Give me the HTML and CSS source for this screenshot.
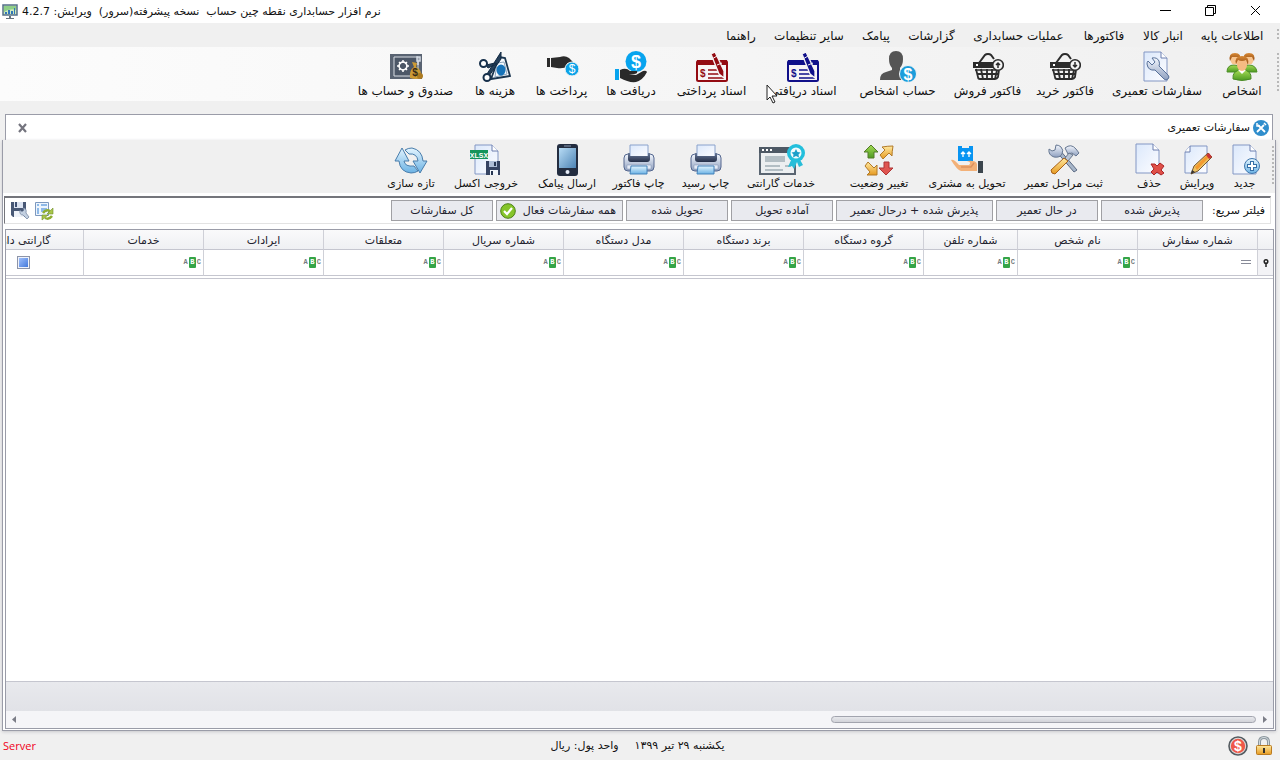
FILE: index.html
```html
<!DOCTYPE html>
<html lang="fa" dir="rtl">
<head>
<meta charset="utf-8">
<title>نرم افزار حسابداری نقطه چین حساب</title>
<link rel="stylesheet" href="styles.css">
</head>
<body>
<svg class="defs" aria-hidden="true">
  <defs>
    <linearGradient id="paper" x1="0" y1="0" x2="1" y2="1"><stop offset="0" stop-color="#dbe8fb"/><stop offset="1" stop-color="#fdfdff"/></linearGradient>
    <linearGradient id="metal" x1="0" y1="0" x2="0" y2="1"><stop offset="0" stop-color="#f2f6fd"/><stop offset="1" stop-color="#8fa0bf"/></linearGradient>
    <linearGradient id="dark" x1="0" y1="0" x2="0" y2="1"><stop offset="0" stop-color="#6b7c9c"/><stop offset="1" stop-color="#252f48"/></linearGradient>
    <linearGradient id="sky" x1="0" y1="0" x2="0" y2="1"><stop offset="0" stop-color="#e4f5ff"/><stop offset="1" stop-color="#6bb2e4"/></linearGradient>
    <linearGradient id="gold" x1="0" y1="0" x2="0" y2="1"><stop offset="0" stop-color="#ffe9a0"/><stop offset="1" stop-color="#e69a20"/></linearGradient>
    <linearGradient id="screen" x1="0" y1="0" x2="1" y2="1"><stop offset="0" stop-color="#b8dcf5"/><stop offset="1" stop-color="#4d84b5"/></linearGradient>
    <linearGradient id="hair" x1="0" y1="0" x2="0" y2="1"><stop offset="0" stop-color="#d98a35"/><stop offset="1" stop-color="#8f4813"/></linearGradient>
    <linearGradient id="leaf" x1="0" y1="0" x2="0" y2="1"><stop offset="0" stop-color="#a5dc55"/><stop offset="1" stop-color="#4d9a21"/></linearGradient>
    <symbol id="page" viewBox="0 0 32 32"><path d="M5 1h17l6 6v23H5z" fill="url(#paper)" stroke="#8397c4"/><path d="M22 1v6h6" fill="#fff" stroke="#6c7fae"/></symbol>
    <symbol id="basket" viewBox="0 0 32 32">
      <path d="m7 12 6-8q1-1 3-1t3 1l3 4" fill="none" stroke="#2b2b2b" stroke-width="2"/>
      <path d="M1 11h20v6H1z" fill="#2b2b2b"/><path d="M4 13h2v2H4z" fill="#fff"/>
      <path d="M4 18l2 8q0 2 2 2h15q2 0 3-2l1-7M5 23h21M9 18l2 10m4-10v10m5-10v10m5-9-2 9" fill="none" stroke="#2b2b2b" stroke-width="1.800"/>
      <path d="M3 19h24" stroke="#2b2b2b" stroke-width="1.500"/>
      <circle cx="26" cy="14" r="5.300" fill="#f4f4f4" stroke="#2b2b2b" stroke-width="1.600"/>
    </symbol>
    <symbol id="cheque" viewBox="0 0 32 32">
      <rect x="1" y="8" width="30" height="20" rx="1.500" fill="#f8f4f5" stroke="currentColor" stroke-width="2"/><path d="M1 7h30v5H1z" fill="currentColor"/>
      <path d="M12 17h10m-10 4h12m-12 4h16" stroke="currentColor" stroke-width="1.500"/>
      <text x="4" y="24" font-size="10" font-weight="bold" fill="currentColor" class="lat">$</text>
      <path d="m15 1 4-2 9 19v7l-5-4z" fill="currentColor" stroke="#f5f3f4" stroke-width="1.300"/><path d="m16 6 5-3m0 9 5-2" stroke="#f5f3f4"/>
    </symbol>
    <symbol id="printer" viewBox="0 0 32 32">
      <rect x="1" y="10" width="30" height="17" rx="4" fill="url(#metal)" stroke="#54678f"/>
      <path d="M7 1h18v12H7z" fill="url(#paper)" stroke="#8aa2cc"/><path d="M5 9h2v3h18V9h2v6q0 3-3 3H8q-3 0-3-3z" fill="url(#dark)"/>
      <path d="M4 21h24v4H4z" fill="#e5ebf6" stroke="#8090b0" stroke-width=".5"/><path d="M8 22h16v8H7z" fill="url(#sky)" stroke="#4382ba"/>
    </symbol>
    <symbol id="tools" viewBox="0 0 32 32">
      <path d="m7 6 19 22 3-2L10 4z" fill="#a7b6c9" stroke="#5d6b84"/><path d="M8 1 7 6 4 7 1 5q-1 6 5 8 6 1 8-3t-1-7Q11 1 8 1z" fill="url(#metal)" stroke="#667791"/>
      <path d="M17 4q6-5 11 1l3 4-3 3-4-3-4 1z" fill="url(#metal)" stroke="#667791"/><path d="m21 9-4 5 3 3 5-6z" fill="#b8c4d5" stroke="#66758c"/><path d="M16 14 3 26q0 4 4 4l13-13z" fill="url(#gold)" stroke="#a86219"/>
    </symbol>
  </defs>
</svg>

<header class="titlebar">
  <div class="win-buttons">
    <button type="button" aria-label="بستن"><svg width="11" height="11"><path d="m1 1 9 9m0-9-9 9" stroke="#000" fill="none"/></svg></button>
    <button type="button" aria-label="بازیابی"><svg width="11" height="11"><path d="M.5 2.500h8v8h-8zM2.500 2V.5h8v8H9" stroke="#000" fill="none"/></svg></button>
    <button type="button" aria-label="کوچک کردن"><svg width="11" height="11"><path d="M0 5.500h11" stroke="#000"/></svg></button>
  </div>
  <h1 class="app-title">نرم افزار حسابداری نقطه چین حساب  نسخه پیشرفته(سرور)  ویرایش: 4.2.7</h1>
  <svg class="app-icon" width="16" height="16"><path d="M1 1h14v10H1z" fill="#cfe9bd" stroke="#56708a" stroke-width="1.500"/><path d="M2 2h12v4q-6-2-12 2z" fill="#8fcf87"/><path d="M3 8h2v2H3zm3-2h2v4H6zm3 1h2v3H9zm3-3h1v6h-1z" fill="#3077bb"/><path d="M7 12h2v2h3v1H4v-1h3z" fill="#66737e"/></svg>
</header>

<nav class="menubar" aria-label="منوی اصلی">
  <button type="button">اطلاعات پایه</button><button type="button">انبار کالا</button><button type="button">فاکتورها</button><button type="button">عملیات حسابداری</button><button type="button">گزارشات</button><button type="button">پیامک</button><button type="button">سایر تنظیمات</button><button type="button">راهنما</button>
</nav>

<div class="toolbar main-tools" role="toolbar" aria-label="ابزار اصلی">
  <div class="group main-group">
    <button type="button" class="tool"><svg viewBox="0 0 32 32"><path d="M1 21q0-7 7-7t8 7zm15 0q0-7 7-7t8 7z" fill="url(#leaf)" stroke="#4d8f28"/><circle cx="9" cy="9" r="4.500" fill="#f8c58f"/><circle cx="23" cy="9" r="4.500" fill="#f8c58f"/><path d="M4 10q-2-8 5-8t5 8l-2-4H6zm14 0q-2-8 5-8t5 8l-2-4h-6z" fill="url(#hair)"/><path d="M7 28q-1-9 9-9t9 9q-9 3-18 0z" fill="url(#leaf)" stroke="#4a8b26"/><path d="m12 19 4 4 4-4z" fill="#fff"/><ellipse cx="16" cy="14" rx="5" ry="6" fill="#f6bb82"/><path d="M10 13Q8 5 16 5t6 9l-2-5q-4 2-8 0z" fill="url(#hair)"/></svg><span>اشخاص</span></button>
    <button type="button" class="tool"><svg viewBox="0 0 32 32"><use href="#page" width="32" height="32" x="-2"/><path d="M6 13q0-2 1-3l4 4 3-3-3-4q5-1 7 3 1 3 0 5l9 9q2 2 0 4t-4 0l-9-9q-7 1-8-6z" fill="url(#metal)" stroke="#577099"/></svg><span>سفارشات تعمیری</span></button>
    <button type="button" class="tool"><svg viewBox="0 0 32 32"><use href="#basket" width="32" height="32"/><path d="M26 11v5m-2-2 2 2 2-2" stroke="#2b2b2b" stroke-width="1.500" fill="none"/></svg><span>فاکتور خرید</span></button>
    <button type="button" class="tool"><svg viewBox="0 0 32 32"><use href="#basket" width="32" height="32"/><path d="M26 17v-5m-2 2 2-2 2 2" stroke="#2b2b2b" stroke-width="1.500" fill="none"/></svg><span>فاکتور فروش</span></button>
    <button type="button" class="tool"><svg class="wide" viewBox="0 0 38 32"><path d="M10 8q0-8 7-8t7 8q0 6-3 9v2l7 3q3 2 3 7H1q0-7 6-8l6-2v-2q-3-3-3-9z" fill="#555"/><circle cx="29" cy="23" r="8.500" fill="#1c9ddb" stroke="#f5f5f5"/><text x="29" y="29" text-anchor="middle" class="lat" font-size="16" font-weight="bold" fill="#fff">$</text></svg><span>حساب اشخاص</span></button>
    <button type="button" class="tool blue"><svg viewBox="0 -2 32 32"><use href="#cheque" width="32" height="32"/></svg><span>اسناد دریافتی</span></button>
    <button type="button" class="tool red"><svg viewBox="0 -2 32 32"><use href="#cheque" width="32" height="32"/></svg><span>اسناد پرداختی</span></button>
    <button type="button" class="tool"><svg viewBox="0 0 32 32"><circle cx="21" cy="10.500" r="10.500" fill="#08a4ee"/><text x="21" y="17" text-anchor="middle" class="lat" font-size="18" fill="#fff" font-weight="bold">$</text><path d="M0 18h4v11H0z" fill="#08a4ee"/><path d="M5 19q6-3 10 1h7q1 3-3 3h-5l7 1 7-4q3-1 4 1-4 8-11 10-7 1-16-4z" fill="#292929"/></svg><span>دریافت ها</span></button>
    <button type="button" class="tool"><svg viewBox="0 0 32 32"><path d="M1 7h3v9H1zm4 0 9-1q5-2 9 1l6 6q-1 2-5 0l-3-1 1 3q-4 3-11 2l-6-1z" fill="#2b2b2b"/><circle cx="26" cy="18" r="7" fill="#0ca3e8" stroke="#f5f5f5"/><text x="26" y="22" text-anchor="middle" class="lat" font-size="12" fill="#fff">$</text></svg><span>پرداخت ها</span></button>
    <button type="button" class="tool"><svg viewBox="0 0 32 32"><path d="m20 6 6 1 5 18-19 3z" fill="#f8fbff" stroke="#1b3650" stroke-width="1.800"/><path d="m18 12 7-1 3 12-12 3z" fill="none" stroke="#8ba4bb"/><ellipse cx="22" cy="19" rx="4.500" ry="5.500" fill="#1673b9"/><path d="M22 1v7L10 25l-2-2zm-4 12L9 17l-2-3 9-2z" fill="#253f59" stroke="#132b44"/><circle cx="4.500" cy="12.500" r="3.500" fill="#fff" stroke="#17304b" stroke-width="2"/><circle cx="8" cy="26.500" r="3.500" fill="#fff" stroke="#17304b" stroke-width="2"/></svg><span>هزینه ها</span></button>
    <button type="button" class="tool"><svg viewBox="0 0 32 32"><path d="M0 3h32v25H0z" fill="#596372"/><path d="M4 6h24v19H4z" fill="#4c5767" stroke="#d9dee4"/><circle cx="13" cy="15" r="4" fill="none" stroke="#fff" stroke-width="1.500"/><path d="M13 9v3m0 6v3m-6-6h3m6 0h3m-10-4 2 2m4 4 2 2m0-8-2 2m-4 4-2 2" stroke="#fff" stroke-width="1.500"/><path d="M27 6h3v4h-3zm1 4v4" stroke="#d5dce5" fill="none" stroke-width="1.500"/><path d="m22 11 5 1-1 4q6 2 5 11-5 2-11 0-1-8 4-11z" fill="#cc9b35"/><circle cx="30" cy="25" r="3" fill="#ad7b21"/><text x="25" y="25" text-anchor="middle" class="lat" font-size="10" font-weight="bold" fill="#352b18">$</text></svg><span>صندوق و حساب ها</span></button>
  </div>
</div>

<main class="document">
  <div class="tab">
    <svg width="16" height="16" viewBox="0 0 16 16"><circle cx="8" cy="8" r="8" fill="#2f8dcc"/><path d="m5 5 7 7m-1-7-7 7" stroke="#fff" stroke-width="1.800"/><path d="M4 3v3h3M11 3l2 2" stroke="#fff" stroke-width="1.500" fill="none"/></svg>
    <h2>سفارشات تعمیری</h2>
    <button type="button" class="tab-close" aria-label="بستن برگه"><svg width="9" height="8"><path d="m1 0 7 8m0-8L1 8" stroke="#74747e" stroke-width="2.200"/></svg></button>
  </div>
  <div class="panel">
    <div class="toolbar order-tools" role="toolbar" aria-label="ابزار سفارشات">
      <div class="group orders-a">
        <button type="button" class="tool"><svg viewBox="0 0 32 32"><use href="#page" width="32" height="32" x="-1"/><circle cx="23" cy="22" r="7.500" fill="url(#sky)" stroke="#4178ae"/><path d="M23 17v10m-5-5h10" stroke="#346fa7" stroke-width="4"/><path d="M23 18v8m-4-4h8" stroke="#fff" stroke-width="2"/></svg><span>جدید</span></button>
        <button type="button" class="tool"><svg viewBox="0 0 32 32"><path d="M9 2h17v27H4V8z" fill="url(#paper)" stroke="#8397c4"/><path d="M9 2v6H4" fill="#fff" stroke="#6c7fae"/><path d="m10 30 3-8 14-13 4 4-14 14z" fill="#ecc365" stroke="#76552f"/><path d="m14 23 13-13 2 2-13 14z" fill="#f49b30"/><path d="m10 30 1-4 3 2z" fill="#343434"/><path d="m25 11 3-2 3 4-3 2z" fill="#c73537"/></svg><span>ویرایش</span></button>
        <button type="button" class="tool"><svg viewBox="0 0 32 32"><use href="#page" width="32" height="32" x="-2" y="-1"/><path d="m18 20 4 0 2 2 3-3 4 3-3 4 3 3-3 2-4-3-3 3-3-3 3-3z" fill="#df5048" stroke="#ac2427"/></svg><span>حذف</span></button>
      </div>
      <div class="group orders-b">
        <button type="button" class="tool"><svg viewBox="0 0 32 32"><use href="#tools" width="32" height="32"/></svg><span>ثبت مراحل تعمیر</span></button>
        <button type="button" class="tool"><svg viewBox="0 0 32 32"><path d="M7 2h4v2h7V2h4v15H7z" fill="#0794f2"/><path d="M12 13V8m-2 2 2-2 2 2m4 3V8m-2 2 2-2 2 2" stroke="#fff" fill="none" stroke-width="1.300"/><path d="M0 16q3-1 8 5h10q3-3-2-4 9-1 10 3v7H10q-4-1-10-11z" fill="#f3b178"/><path d="M10 23h10l3-4" stroke="#de925e" stroke-width="1.500" fill="none"/><path d="M27 17h5v12h-5z" fill="#3b454d"/></svg><span>تحویل به مشتری</span></button>
        <button type="button" class="tool"><svg viewBox="0 0 32 32"><path d="m8 1 7 7h-4v6H5V8H1z" fill="url(#leaf)" stroke="#527a28"/><path d="M19 3q6-1 11-1-1 6-1 10l-3-3-6 6-3-4 5-5z" fill="url(#gold)" stroke="#b17927"/><path d="m5 18 6 6 3-3v10H4l3-3-5-6z" fill="url(#gold)" stroke="#b17927"/><path d="M21 18h5v6h4l-7 7-7-7h5z" fill="#df5550" stroke="#ae3435"/></svg><span>تغییر وضعیت</span></button>
      </div>
      <div class="group orders-c">
        <button type="button" class="tool"><svg class="ultra" viewBox="0 0 46 32"><path d="M2 4h35v26H2z" fill="#eceff1" stroke="#5a6571" stroke-width="2"/><path d="M1 3h37v6H1z" fill="#4d5864"/><path d="M4 5h2v2H4zm4 0h2v2H8zm4 0h2v2h-2z" fill="#fff"/><path d="M7 12h20v6H7zm0 9h15v2H7zm0 4h18v2H7zm20-4h6v2h-6z" fill="#b3bec4"/><path d="m34 14-4 9 4-1 2 3 3-7 2 5 4-2-4-7z" fill="#28bdd8"/><circle cx="38" cy="9" r="9" fill="#23bfdc"/><circle cx="38" cy="9" r="5.500" fill="#f3fbfd"/><path d="m38 5 1.500 3 3 .5-2 2 .5 3-3-1.500-3 1.500.5-3-2-2 3-.5z" fill="#1c9fca"/></svg><span>خدمات گارانتی</span></button>
        <button type="button" class="tool"><svg viewBox="0 0 32 32"><use href="#printer" width="32" height="32"/></svg><span>چاپ رسید</span></button>
        <button type="button" class="tool"><svg viewBox="0 0 32 32"><use href="#printer" width="32" height="32"/></svg><span>چاپ فاکتور</span></button>
        <button type="button" class="tool"><svg viewBox="0 0 32 32"><rect x="6" y="0" width="21" height="32" rx="3" fill="#232d40"/><path d="M8 4h17v20H8z" fill="url(#screen)"/><path d="M13 2h7" stroke="#899ab1"/><circle cx="16.500" cy="28" r="2" fill="#e7edf8"/></svg><span>ارسال پیامک</span></button>
        <button type="button" class="tool"><svg viewBox="0 0 32 32"><use href="#page" width="32" height="32"/><path d="M0 6h18v9H0z" fill="#13945b"/><text x="9" y="13.500" text-anchor="middle" class="lat" font-size="7" font-weight="bold" fill="#fff">XLSX</text><path d="M16 17h14v14H16z" fill="#354362"/><path d="M19 17h8v6h-8z" fill="#aebdd7"/><path d="M20 26h8v5h-8z" fill="#f1f5fa"/><path d="M24 18h2v4h-2zm-3 9h2v4h-2z" fill="#263552"/></svg><span>خروجی اکسل</span></button>
        <button type="button" class="tool"><svg viewBox="0 0 32 32"><path d="M7 4 0 17h4q1 11 12 12 4 0 7-2l-4-5q-9 1-10-5h5z" fill="url(#sky)" stroke="#497dab"/><path d="m25 29 7-12h-4Q27 6 17 4q-4 0-7 2l4 4q8-1 9 7h-5z" fill="url(#sky)" stroke="#497dab"/></svg><span>تازه سازی</span></button>
      </div>
    </div>

    <div class="quick">
      <span class="quick-label">فیلتر سریع:</span>
      <div class="filters">
        <button type="button">پذیرش شده</button><button type="button">در حال تعمیر</button><button type="button">پذیرش شده + درحال تعمیر</button><button type="button">آماده تحویل</button><button type="button">تحویل شده</button><button type="button" class="active"><span>همه سفارشات فعال</span><svg width="16" height="16"><circle cx="8" cy="8" r="7.300" fill="#86c52b" stroke="#4d8118"/><path d="m4 8 3 3 5-6" fill="none" stroke="#fff" stroke-width="2.200"/></svg></button><button type="button">کل سفارشات</button>
      </div>
      <div class="view-tools">
        <button type="button" aria-label="بازنشانی نما"><svg width="20" height="20"><path d="M.5 1.500h13v13H.5z" fill="#edf5fd" stroke="#7d98be"/><path d="M2 3h2v2H2zm4 0h6v2H6zM2 7h2v6H2zm4 0h6v4H6z" fill="#8eb9e8"/><path d="M8 12q3-4 7-2" fill="none" stroke="#8fae31" stroke-width="2.500"/><path d="M18 7v6h-6z" fill="#a8c64a" stroke="#708d29" stroke-width=".6"/><path d="M17 15q-3 4-7 2" fill="none" stroke="#8fae31" stroke-width="2.500"/><path d="M7 19v-5h6z" fill="#a8c64a" stroke="#708d29" stroke-width=".6"/></svg></button>
        <button type="button" aria-label="ذخیره نما"><svg width="20" height="20"><path d="M1 1h15v15H3l-2-2z" fill="#485875"/><path d="M4 1h9v6H4z" fill="#dce4f2"/><path d="M5 1h2v5H5z" fill="#405173"/><path d="M4 10h10v6H4z" fill="#eef2f8"/><path d="m10 9 2 2 2-2-1-2q4 0 3 5l3 4-2 2-4-4q-4 0-3-5z" fill="#c3d0e1" stroke="#6c7c99" stroke-width=".7"/></svg></button>
      </div>
    </div>

    <section class="grid" aria-label="فهرست سفارشات">
      <div class="grid-body">
        <table>
          <colgroup><col class="c-mark"><col class="c"><col class="c"><col class="c-phone"><col class="c"><col class="c"><col class="c"><col class="c"><col class="c"><col class="c"><col class="c"><col class="c"></colgroup>
          <thead><tr><td></td><th>شماره سفارش</th><th>نام شخص</th><th>شماره تلفن</th><th>گروه دستگاه</th><th>برند دستگاه</th><th>مدل دستگاه</th><th>شماره سریال</th><th>متعلقات</th><th>ایرادات</th><th>خدمات</th><th>گارانتی دارد</th></tr></thead>
          <tbody><tr>
            <td class="pin"><svg width="6" height="8"><circle cx="3" cy="2.500" r="1.800" fill="none" stroke="#222" stroke-width="1.500"/><path d="M3 4v4" stroke="#222" stroke-width="1.500"/></svg></td>
            <td><label class="cell"><svg width="10" height="5"><path d="M0 .5h10M0 3.500h10" stroke="#888b98"/></svg><input type="text" aria-label="فیلتر شماره سفارش"></label></td>
            <td><label class="cell"><span class="abc">A<b>B</b>C</span><input type="text" aria-label="فیلتر نام شخص"></label></td>
            <td><label class="cell"><span class="abc">A<b>B</b>C</span><input type="text" aria-label="فیلتر شماره تلفن"></label></td>
            <td><label class="cell"><span class="abc">A<b>B</b>C</span><input type="text" aria-label="فیلتر گروه دستگاه"></label></td>
            <td><label class="cell"><span class="abc">A<b>B</b>C</span><input type="text" aria-label="فیلتر برند دستگاه"></label></td>
            <td><label class="cell"><span class="abc">A<b>B</b>C</span><input type="text" aria-label="فیلتر مدل دستگاه"></label></td>
            <td><label class="cell"><span class="abc">A<b>B</b>C</span><input type="text" aria-label="فیلتر شماره سریال"></label></td>
            <td><label class="cell"><span class="abc">A<b>B</b>C</span><input type="text" aria-label="فیلتر متعلقات"></label></td>
            <td><label class="cell"><span class="abc">A<b>B</b>C</span><input type="text" aria-label="فیلتر ایرادات"></label></td>
            <td><label class="cell"><span class="abc">A<b>B</b>C</span><input type="text" aria-label="فیلتر خدمات"></label></td>
            <td class="check-cell"><input type="checkbox" aria-label="فیلتر گارانتی دارد"></td>
          </tr></tbody>
        </table>
      </div>
      <div class="grid-footer"></div>
      <div class="scroll">
        <svg width="4" height="7"><path d="m0 0 4 3.500L0 7z" fill="#7b7d87"/></svg>
        <div class="track"><div class="thumb"></div></div>
        <svg width="4" height="7"><path d="M4 0 0 3.500 4 7z" fill="#7b7d87"/></svg>
      </div>
    </section>
  </div>
</main>

<footer class="status">
  <div class="status-icons">
    <svg width="16" height="20"><path d="M3.500 10V6q0-4.500 4.500-4.500T12.500 6v4" fill="none" stroke="#8b969d" stroke-width="3"/><path d="M3.500 10V6q0-4.500 4.500-4.500T12.500 6v4" fill="none" stroke="#d2dade"/><rect x=".5" y="9.500" width="15" height="9" rx="1" fill="url(#gold)" stroke="#b97b22"/><path d="M7 12h2v5H7z" fill="#32302c"/></svg>
    <svg width="20" height="20"><circle cx="10" cy="10" r="9" fill="#ddd" stroke="#545b60" stroke-width="1.600"/><circle cx="10" cy="10" r="7.200" fill="#ef5849"/><text x="10" y="15" text-anchor="middle" class="lat" font-size="14" font-weight="bold" fill="#fff">$</text></svg>
  </div>
  <div class="status-text"><span>یکشنبه ۲۹ تیر ۱۳۹۹</span><span>واحد پول: ریال</span></div>
  <span class="server">Server</span>
</footer>
<svg class="cursor" width="12" height="20" aria-hidden="true"><path d="M1 1v15l3-3 3 6 2-1-3-6h5z" fill="#fff" stroke="#222"/></svg>
</body>
</html>
```

FILE: styles.css
```css
* { box-sizing: border-box; }
html, body { margin: 0; height: 100%; }
body {
  display: flex;
  flex-direction: column;
  overflow: hidden;
  background: #f0f0f0;
  color: #111;
  font: 11px/16px "DejaVu Sans", sans-serif;
}
button { padding: 0; border: 0; background: none; color: inherit; font: inherit; white-space: nowrap; }
h1, h2 { margin: 0; font: inherit; }
svg { display: block; flex: none; overflow: visible; }
.defs { position: absolute; width: 0; height: 0; }
.lat { direction: ltr; font-family: "Liberation Sans", sans-serif; }

.titlebar { display: flex; align-items: center; height: 23px; padding: 0 19px 0 2px; background: #fff; }
.win-buttons { display: flex; gap: 34px; align-self: flex-start; padding-top: 5px; }
.app-title { margin-right: auto; white-space: pre; }
.app-icon { margin-right: 4px; }

.menubar {
  display: grid;
  grid-template-columns: 80px 58px 60px 111px 63px 48px 86px 50px;
  height: 24px;
  padding: 2px 8px 0 0;
  font-size: 12px;
}
.menubar, .toolbar { position: relative; }
.menubar::after, .toolbar::after {
  content: "";
  position: absolute;
  right: 1px;
  top: 6px;
  bottom: 8px;
  width: 2px;
  background: repeating-linear-gradient(#b8b8b8 0 2px, transparent 2px 4px);
}
.toolbar { display: flex; padding-top: 4px; flex: none; }
.main-tools { height: 54px; padding-right: 8px; background: linear-gradient(to left, #f0f0f0, #fcfcfc); font-size: 12px; }
.order-tools { height: 53px; padding-right: 7px; background: #f0f0f0; }
.group { display: grid; }
.main-group { grid-template-columns: 60px 110px 74px 81px 99px 90px 93px 68px 71px 62px 117px; }
.orders-a { grid-template-columns: 47px 48px 48px; margin-left: 14px; }
.orders-b { grid-template-columns: 95px 98px 78px; margin-left: 18px; }
.orders-c { grid-template-columns: 82px 69px 65px 78px 84px 66px; }
.tool { display: flex; flex-direction: column; align-items: center; }
.tool svg { width: 32px; height: 32px; }
.tool .wide { width: 38px; }
.tool .ultra { width: 46px; }
.blue svg { color: #10108a; }
.red svg { color: #940b12; }

.document { flex: 1; display: flex; flex-direction: column; min-height: 0; padding: 13px 4px 0 2px; }
.tab {
  display: flex;
  align-items: center;
  gap: 3px;
  height: 26px;
  margin: 0 3px;
  padding: 0 3px 0 12px;
  border: 1px solid #9a9ca8;
  border-bottom: 0;
  background: #fff;
}
.tab-close { margin-right: auto; }
.panel {
  flex: 1;
  display: flex;
  flex-direction: column;
  min-height: 0;
  border: 1px solid #9a9ca8;
  border-top: 0;
  background: #fff;
  box-shadow: 0 1px 3px #c8c8cc;
}
.quick {
  display: flex;
  align-items: center;
  height: 28px;
  margin: 3px 4px 5px 1px;
  padding: 0 5px;
  border: 1px solid #e3e3e3;
  border-top: 2px solid #74757b;
  border-left-color: #74757b;
}
.quick-label { width: 62px; white-space: nowrap; }
.filters { display: grid; grid-template-columns: 102px 102px 157px 102px 102px 127px 102px; gap: 3px; }
.filters button { height: 21px; border: 1px solid #a0a0a4; background: #e9eaef; color: #22222e; }
.filters .active { display: flex; align-items: center; justify-content: space-between; padding: 0 6px 0 3px; }
.view-tools { display: flex; gap: 5px; margin-right: auto; }

.grid { flex: 1; display: flex; flex-direction: column; min-height: 0; margin: 0 1px 1px 2px; border: 1px solid #9a9ca8; }
.grid-body { flex: 1; overflow: hidden; }
table { width: 1310px; table-layout: fixed; border-collapse: separate; border-spacing: 0; border-bottom: 1px solid #c5c6cf; padding-bottom: 2px; }
.c-mark { width: 16px; }
.c { width: 120px; }
.c-phone { width: 94px; }
th, td { padding: 0; border-left: 1px solid #cfd0d7; font-weight: normal; text-align: center; white-space: nowrap; }
thead th, thead td { height: 20px; padding-top: 2px; border-bottom: 1px solid #c5c6cf; background: linear-gradient(#fafafb, #eff0f3); color: #22222e; }
tbody td { height: 26px; border-bottom: 1px solid #c5c6cf; }
.pin { background: #f3f3f6; }
.pin svg { margin: auto; }
.cell { display: flex; align-items: center; padding-right: 2px; }
.cell > svg { margin-right: 4px; }
.cell input { flex: 1; min-width: 0; height: 20px; padding: 0; border: 0; background: none; font: inherit; }
.abc { display: flex; direction: ltr; gap: 1px; color: #777c80; font: bold 7px/11px "Liberation Mono", monospace; }
.abc b { width: 7px; border-radius: 1px; background: #35a447; color: #fff; }
.check-cell input {
  display: block;
  width: 13px;
  height: 13px;
  margin: auto;
  appearance: none;
  border: 1px solid #8d94a8;
  background: linear-gradient(135deg, #a9c7ff, #3971d8);
  box-shadow: inset 0 0 0 1px #eff3fb;
}
.grid-footer { height: 30px; border-top: 1px solid #c5c6cf; background: linear-gradient(#e8e9ed, #e1e2e7); }
.scroll { display: flex; align-items: center; gap: 7px; height: 17px; padding: 0 6px; background: #f5f5f8; }
.track { flex: 1; }
.thumb { width: 34.5%; height: 7px; border: 1px solid #a2a4ae; border-radius: 4px; background: linear-gradient(#e7e8ec, #d2d3d9); }

.status { display: grid; grid-template-columns: 1fr auto 1fr; align-items: center; height: 29px; padding: 1px 8px 0 3px; }
.status-icons { display: flex; align-items: center; gap: 8px; }
.status-text { display: flex; gap: 16px; }
.server { direction: ltr; justify-self: end; color: #f00020; font: 11px/16px "Open Sans", sans-serif; }
.cursor { position: absolute; left: 766px; top: 84px; }
```
